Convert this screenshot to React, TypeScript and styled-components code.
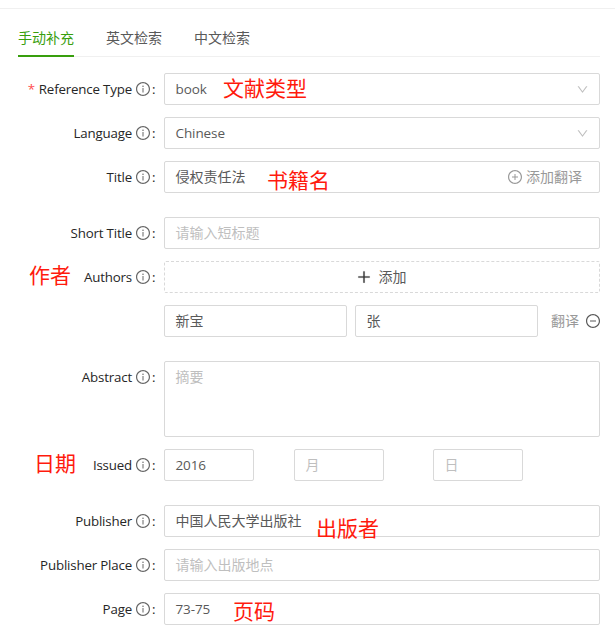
import React from "react";
import styled, { createGlobalStyle } from "styled-components";
import {
  AiOutlineDown,
  AiOutlineInfoCircle,
  AiOutlineMinusCircle,
  AiOutlinePlus,
  AiOutlinePlusCircle,
} from "react-icons/ai";

const GlobalStyle = createGlobalStyle`
  * { box-sizing: border-box; }
  body {
    margin: 0;
    background: #fff;
    color: #595959;
    font: 400 14px/22px "Open Sans", "Noto Sans CJK SC", sans-serif;
    overflow: hidden;
  }
  svg { display: block; flex: none; }
`;

const Page = styled.main`
  position: relative;
  width: 615px;
  height: 632px;
  padding-top: 8px;
  overflow: hidden;
`;

const Panel = styled.section`
  border-top: 1px solid #f0f0f0;
  padding: 11px 15px 0 18px;
`;

const Tabs = styled.nav`
  display: flex;
  gap: 32px;
  height: 37px;
  border-bottom: 1px solid #f0f0f0;
`;

const Tab = styled.a<{ $active?: boolean }>`
  height: 37px;
  padding-top: 7px;
  color: ${(p) => (p.$active ? "#389e0d" : "#595959")};
  border-bottom: 2px solid ${(p) => (p.$active ? "#389e0d" : "transparent")};
`;

const Form = styled.form`
  display: flex;
  flex-direction: column;
  padding-top: 16px;
`;

const Row = styled.div<{ $gap?: number }>`
  display: flex;
  align-items: flex-start;
  margin-bottom: ${(p) => p.$gap ?? 12}px;
`;

const Label = styled.label`
  display: flex;
  align-items: center;
  justify-content: flex-end;
  flex: none;
  width: 139px;
  height: 32px;
  margin-right: 7px;
  color: #262626;
  font-size: 13.3px;
  letter-spacing: -0.17px;
  white-space: nowrap;
  svg { margin-left: 3px; color: #666; }
`;

const Required = styled.span`
  margin-right: 4px;
  color: #ff4d4f;
`;

const Colon = styled.span`
  width: 5px;
  margin-left: 1px;
`;

const Field = styled.div<{ $width?: number; $tall?: boolean; $empty?: boolean }>`
  display: flex;
  align-items: ${(p) => (p.$tall ? "flex-start" : "center")};
  justify-content: space-between;
  flex: ${(p) => (p.$width ? "none" : "1")};
  width: ${(p) => (p.$width ? p.$width + "px" : "auto")};
  height: ${(p) => (p.$tall ? 76 : 32)}px;
  padding: ${(p) => (p.$tall ? "4px" : "0")} 10px ${(p) => (p.$tall ? "4px" : "0")} 10.5px;
  border: 1px solid #d9d9d9;
  border-radius: 2px;
  color: ${(p) => (p.$empty ? "#bfbfbf" : "#595959")};
  white-space: nowrap;
`;

const Latin = styled.span`
  font-size: 13.5px;
  letter-spacing: -0.1px;
`;

const Arrow = styled(AiOutlineDown)`
  color: #bfbfbf;
  font-size: 13px;
`;

const AddTranslation = styled.span`
  display: flex;
  align-items: center;
  gap: 3px;
  margin-right: 7px;
  color: #999;
`;

const AddButton = styled.button`
  display: flex;
  align-items: center;
  justify-content: center;
  gap: 7px;
  flex: 1;
  height: 32px;
  padding: 0 2px 0 0;
  background: #fff;
  border: 1px dashed #d9d9d9;
  border-radius: 2px;
  color: #595959;
  font: inherit;
  svg { color: #333; stroke: #333; stroke-width: 20px; }
`;

const Names = styled.div`
  display: flex;
  align-items: center;
  flex: 1;
  gap: 8px;
  margin-left: 146px;
`;

const Translate = styled.span`
  display: flex;
  align-items: center;
  gap: 6px;
  margin: 0 -1px 0 5px;
  color: #999;
  svg { color: #595959; }
`;

const Dates = styled.div`
  display: grid;
  grid-template-columns: 130px 139px 90px;
`;

const Note = styled.span<{ $x: number; $y: number }>`
  position: absolute;
  left: ${(p) => p.$x}px;
  top: ${(p) => p.$y}px;
  color: #ff1a0d;
  font-size: 21px;
  line-height: 30px;
  white-space: nowrap;
`;

const notes = [
  { text: "文献类型", x: 223, y: 73 },
  { text: "书籍名", x: 267, y: 165 },
  { text: "作者", x: 29, y: 260 },
  { text: "日期", x: 34, y: 448 },
  { text: "出版者", x: 316, y: 513 },
  { text: "页码", x: 233, y: 596 },
];

function FieldLabel({ text, required }: { text: string; required?: boolean }) {
  return (
    <Label>
      {required && <Required>*</Required>}
      <span>{text}</span>
      <AiOutlineInfoCircle size={16} />
      <Colon>:</Colon>
    </Label>
  );
}

export default function App() {
  return (
    <Page>
      <GlobalStyle />
      <Panel>
        <Tabs>
          <Tab $active>手动补充</Tab>
          <Tab>英文检索</Tab>
          <Tab>中文检索</Tab>
        </Tabs>
        <Form>
          <Row>
            <FieldLabel text="Reference Type" required />
            <Field><Latin>book</Latin><Arrow /></Field>
          </Row>
          <Row>
            <FieldLabel text="Language" />
            <Field><Latin>Chinese</Latin><Arrow /></Field>
          </Row>
          <Row $gap={24}>
            <FieldLabel text="Title" />
            <Field>
              侵权责任法
              <AddTranslation><AiOutlinePlusCircle size={16} />添加翻译</AddTranslation>
            </Field>
          </Row>
          <Row>
            <FieldLabel text="Short Title" />
            <Field $empty>请输入短标题</Field>
          </Row>
          <Row>
            <FieldLabel text="Authors" />
            <AddButton type="button"><AiOutlinePlus size={16} />添加</AddButton>
          </Row>
          <Row $gap={24}>
            <Names>
              <Field $width={183}>新宝</Field>
              <Field $width={183}>张</Field>
              <Translate>翻译<AiOutlineMinusCircle size={16} /></Translate>
            </Names>
          </Row>
          <Row>
            <FieldLabel text="Abstract" />
            <Field $tall $empty>摘要</Field>
          </Row>
          <Row $gap={24}>
            <FieldLabel text="Issued" />
            <Dates>
              <Field $width={90}><Latin>2016</Latin></Field>
              <Field $width={90} $empty>月</Field>
              <Field $width={90} $empty>日</Field>
            </Dates>
          </Row>
          <Row>
            <FieldLabel text="Publisher" />
            <Field>中国人民大学出版社</Field>
          </Row>
          <Row>
            <FieldLabel text="Publisher Place" />
            <Field $empty>请输入出版地点</Field>
          </Row>
          <Row>
            <FieldLabel text="Page" />
            <Field><Latin>73-75</Latin></Field>
          </Row>
        </Form>
      </Panel>
      {notes.map((n) => (
        <Note key={n.text} $x={n.x} $y={n.y}>{n.text}</Note>
      ))}
    </Page>
  );
}
